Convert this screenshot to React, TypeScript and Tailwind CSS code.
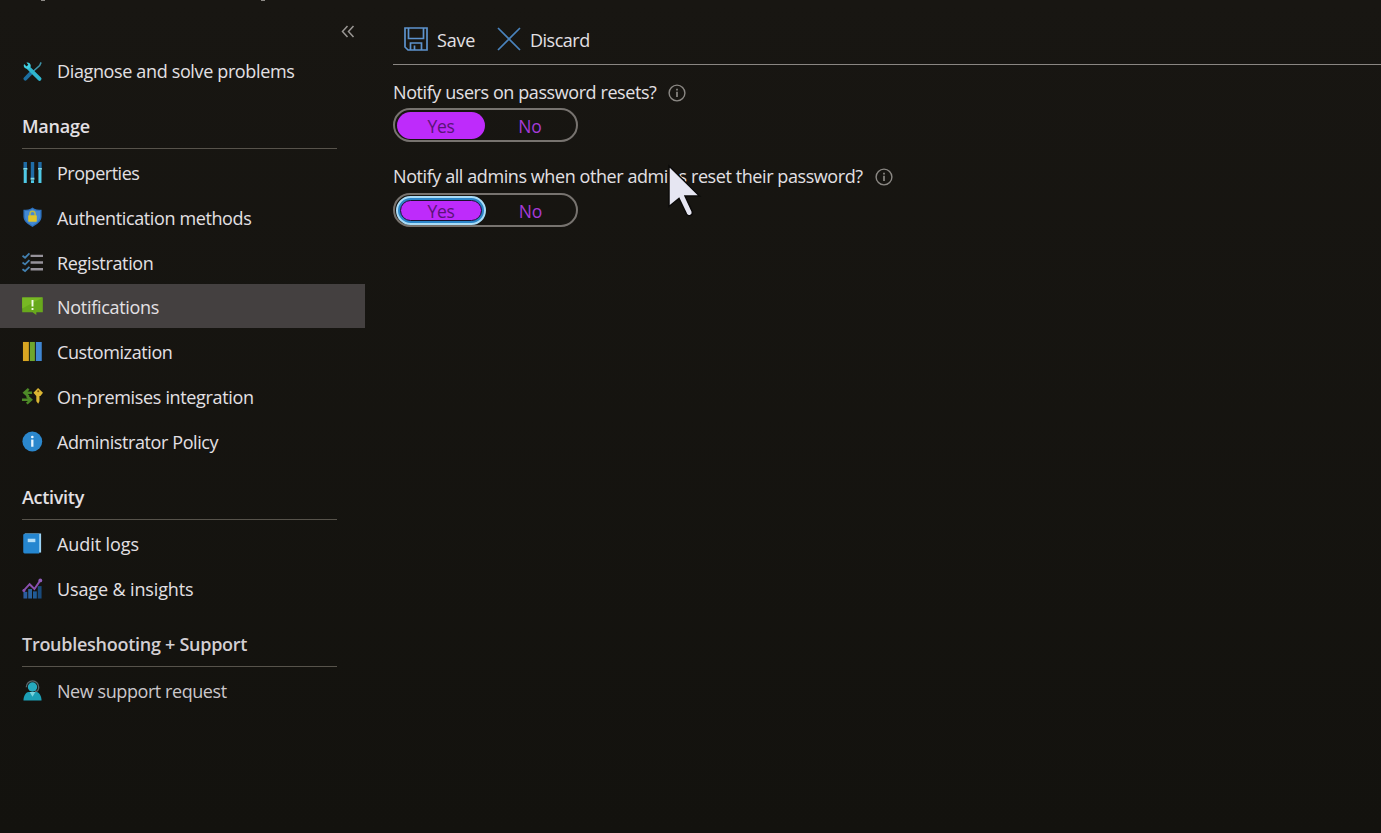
import React from "react";

type IconProps = { children: React.ReactNode };

function Icon({ children }: IconProps) {
  return (
    <svg viewBox="0 0 22 22" className="mt-[2px] h-[21px] w-[21px] shrink-0" fill="none">
      {children}
    </svg>
  );
}

const ToolsIcon = () => (
  <Icon>
    <path d="M20 1.500 18.500 4.800 11.500 11" stroke="#3f93a8" strokeWidth="1.600" />
    <path d="M9.500 12.500 3.500 18.600" stroke="#1c6ea0" strokeWidth="4" strokeLinecap="round" />
    <path d="M6.500 7 18.400 18.800" stroke="#2fb6cf" strokeWidth="4" strokeLinecap="round" />
    <path d="M2.200 3.200 4.800 5.700 6.600 3.900 4.600 1.600C7 1 9.400 2.600 9.200 5.600 8.400 8.400 5 9 3 7.400 1.700 6.200 1.600 4.500 2.200 3.200Z" fill="#3fd0e2" />
  </Icon>
);

const SlidersIcon = () => (
  <Icon>
    <path d="M3.400 0v6.500M11 0v17M18.800 0v6.500" stroke="#1f6ca6" strokeWidth="3.600" />
    <path d="M3.400 8v14M18.800 8v14M11 19v3" stroke="#4fc9e6" strokeWidth="3.200" />
    <path d="M1.400 7.200h4.200M16.800 7.200h4M9 17.500h4" stroke="#7cdcf0" strokeWidth="2" />
  </Icon>
);

const ShieldIcon = () => (
  <Icon>
    <path d="M11 .5C8.500 2.600 5 3 1.500 3v7c0 5.200 5.300 8.600 9.500 11 4.200-2.400 9.500-5.800 9.500-11V3c-3.500 0-7-.4-9.500-2.500Z" fill="#2d72c0" />
    <path d="M11 2C8.500 3.900 5.800 4.200 3 4.300V10c0 4.300 4.300 7.100 8 9.300 3.700-2.200 8-5 8-9.300V4.300C16.200 4.200 13.500 3.900 11 2Z" fill="#4389d3" />
    <path d="M8.300 9V7.200a2.700 2.700 0 0 1 5.400 0V9" stroke="#b9b84a" strokeWidth="1.600" />
    <rect x="6.500" y="8.600" width="9" height="6.800" rx=".7" fill="#dfc62c" />
  </Icon>
);

const ChecklistIcon = () => (
  <Icon>
    <path d="m.5 4 2.700 2L7.800 1.500M.5 11l2.700 2 4.600-4.500M.5 18l2.700 2 4.600-4.500" stroke="#4380b0" strokeWidth="1.900" />
    <path d="M9 4h13M9 11h13M9 18h13" stroke="#96929a" strokeWidth="2.500" />
  </Icon>
);

const AlertIcon = () => (
  <Icon>
    <path d="M.2 1.500h21.600V17H15v3L11 17H.2Z" fill="#68a91c" />
    <path d="M.2 1.500h21.600L.2 13Z" fill="#77b824" />
    <path d="M11 4.200v6.800M11 12.500v2.200" stroke="#f4fbe9" strokeWidth="2" />
  </Icon>
);

const ColumnsIcon = () => (
  <Icon>
    <path d="M1 1h6.200v20H1z" fill="#d9a622" />
    <path d="M8.200 1h5.300v20H8.200z" fill="#6fa62c" />
    <path d="M14.500 1h6.200v20h-6.200z" fill="#3f86d2" />
  </Icon>
);

const SyncKeyIcon = () => (
  <Icon>
    <path d="M10.500 7H3M7 3 2.500 7 7 11M0 14.500h8M5 10.500l4.500 4-4.500 4" stroke="#4e8a28" strokeWidth="2.600" />
    <path d="M16.800 2 22 7l-2.700 3.500h-1V16l-1.300 2.500-2-2.500v-5.500L12 7Z" fill="#dcb633" />
    <circle cx="17" cy="5.500" r="1.100" fill="#77510a" />
  </Icon>
);

const InfoBlueIcon = () => (
  <Icon>
    <circle cx="10.800" cy="11" r="10.400" fill="#2b87cd" />
    <circle cx="10.800" cy="6.300" r="1.400" fill="#e8f5ff" />
    <path d="M10.800 9v7.500" stroke="#e8f5ff" strokeWidth="2.400" />
  </Icon>
);

const BookIcon = () => (
  <Icon>
    <path d="M3 .5h17V20.500H3z" fill="#9cd3f5" />
    <path d="M1.300 2A1.500 1.500 0 0 1 2.800.8H18V21.500H2.800a1.500 1.500 0 0 1-1.500-1.500Z" fill="#2586d0" />
    <path d="M6 6h8v3.600H6z" fill="#b5dff8" />
  </Icon>
);

const ChartIcon = () => (
  <Icon>
    <path d="M1.500 14.500h4v7h-4z" fill="#2b5d9e" />
    <path d="M6.500 11.500h4v10h-4z" fill="#2a619c" />
    <path d="M11.500 14h4v7.500h-4z" fill="#205b96" />
    <path d="M16.500 8.500h4v13h-4z" fill="#194a7b" />
    <path d="m1.500 13.500 6.500-7 5 5L19.200 2.500" stroke="#8a50b0" strokeWidth="2" />
    <circle cx="19.200" cy="2.500" r="2" fill="#8f5cb8" />
    <circle cx="2" cy="13" r="1.600" fill="#8a50b0" />
  </Icon>
);

const SupportIcon = () => (
  <Icon>
    <path d="M4.500 7.500a6.300 6.300 0 0 1 13 0c0 3-1.500 4.500-4 4.800" stroke="#59666c" strokeWidth="1.400" />
    <path d="M1.500 21.500c.3-5 2-8.500 5.500-9h8c3.500.5 5.200 4 5.500 9Z" fill="#1c9fb5" />
    <circle cx="11" cy="7.300" r="4.900" fill="#26a9bf" />
    <path d="m8 12.500 3 5 3-5Z" fill="#79d3de" />
  </Icon>
);

type Item = { label: string; icon: () => React.ReactElement; spacing: string; active?: boolean };

const manage: Item[] = [
  { label: "Properties", icon: SlidersIcon, spacing: "tracking-[-0.47px]" },
  { label: "Authentication methods", icon: ShieldIcon, spacing: "tracking-[-0.38px]" },
  { label: "Registration", icon: ChecklistIcon, spacing: "tracking-[-0.35px]" },
  { label: "Notifications", icon: AlertIcon, spacing: "tracking-[-0.3px]", active: true },
  { label: "Customization", icon: ColumnsIcon, spacing: "tracking-[-0.4px]" },
  { label: "On-premises integration", icon: SyncKeyIcon, spacing: "tracking-[-0.34px]" },
  { label: "Administrator Policy", icon: InfoBlueIcon, spacing: "tracking-[-0.4px]" },
];

const activity: Item[] = [
  { label: "Audit logs", icon: BookIcon, spacing: "tracking-[-0.08px]" },
  { label: "Usage & insights", icon: ChartIcon, spacing: "tracking-[-0.13px]" },
];

const support: Item[] = [{ label: "New support request", icon: SupportIcon, spacing: "tracking-[-0.43px] text-[#cbc7cb]" }];

function NavRow({ item, raised }: { item: Item; raised?: boolean }) {
  const Glyph = item.icon;
  return (
    <a className={`flex h-[44.85px] items-center pl-[22px] ${item.active ? "bg-[#444040]" : ""}`}>
      <Glyph />
      <span className={`ml-[14px] leading-6 whitespace-nowrap ${raised ? "pt-[1px]" : "pt-[3px]"} ${item.spacing}`}>{item.label}</span>
    </a>
  );
}

function Section({ title, items, heading }: { title: string; items: Item[]; heading: string }) {
  return (
    <section>
      <h2 className={`mr-[28px] ml-[22px] flex items-end border-b border-[#57534b] pb-[10px] leading-6 font-semibold ${heading}`}>
        {title}
      </h2>
      {items.map((item) => (
        <NavRow key={item.label} item={item} />
      ))}
    </section>
  );
}

function Info() {
  return (
    <svg viewBox="0 0 18 18" className="mt-[2px] h-[18px] w-[18px]" fill="none">
      <circle cx="9" cy="9" r="7.900" stroke="#8b8884" strokeWidth="1.400" />
      <path d="M9 7.700v5.300M9 4.800v1.600" stroke="#8b8884" strokeWidth="1.700" />
    </svg>
  );
}

function Toggle({ focused }: { focused?: boolean }) {
  return (
    <div className="flex h-[34px] w-[185px] items-center rounded-full border-2 border-[#77736f] p-[1px] text-[17.500px]">
      {focused ? (
        <div className="h-[29px] w-[90px] shrink-0 rounded-full border-2 border-[#a9dcf8] bg-[#2b86c9] p-[2px]">
          <button className="flex h-full w-full items-center justify-center rounded-full border border-[#1c1030] bg-[#be2bfb] pt-[2px] tracking-[-0.3px] text-[#5a1478]">Yes</button>
        </div>
      ) : (
        <button className="ml-[1px] flex h-[27px] w-[88px] shrink-0 items-center justify-center rounded-full bg-[#be2bfb] pt-[2px] tracking-[-0.3px] text-[#5a1478]">Yes</button>
      )}
      <button className="flex-1 pt-[2px] text-center text-[#a63bd8]">No</button>
    </div>
  );
}

export default function App() {
  return (
    <div className="relative flex h-[833px] w-[1381px] overflow-hidden bg-linear-to-b from-[#181612] to-[#13120e] font-['Open_Sans','Noto_Sans',sans-serif] text-[18px] text-[#e3e0e4]">
      <aside className="w-[365px] shrink-0">
        <div className="flex h-[48px] justify-end pt-[25px] pr-[10px]">
          <svg viewBox="0 0 14 14" className="h-[14px] w-[14px]" fill="none" stroke="#9a9794" strokeWidth="1.500">
            <path d="M6.500 1 1.500 6.500l5 5.500M12.500 1l-5 5.500 5 5.500" />
          </svg>
        </div>
        <NavRow raised item={{ label: "Diagnose and solve problems", icon: ToolsIcon, spacing: "tracking-[-0.36px]" }} />
        <Section title="Manage" items={manage} heading="h-[56.15px] tracking-[-0.25px]" />
        <Section title="Activity" items={activity} heading="h-[57px] tracking-[-0.3px]" />
        <Section title="Troubleshooting + Support" items={support} heading="h-[57.200px] tracking-[-0.27px] text-[#d3cfd3]" />
      </aside>
      <main className="ml-[28px] flex-1">
        <div className="flex h-[65px] items-center border-b border-[#8a8682] pt-[13px] pl-[11px]">
          <svg viewBox="0 0 24 24" className="h-[24px] w-[24px]" fill="none" stroke="#5d93cd" strokeWidth="1.700">
            <path d="M1 1h22v22H4l-3-3ZM4.500 1v10.500h15V1M6.500 23v-7h11v7M10.500 18.500V23" />
          </svg>
          <span className="ml-[9px] w-[38px] pt-[3px] tracking-[-0.2px]">Save</span>
          <svg viewBox="0 0 24 24" className="ml-[22px] h-[24px] w-[24px]" fill="none" stroke="#4a83bd" strokeWidth="1.700">
            <path d="m1 1 22 22M23 1 1 23" />
          </svg>
          <span className="ml-[9px] pt-[3px] tracking-[-0.5px]">Discard</span>
        </div>
        <div className="mt-[15px] flex h-6 items-center">
          <span className="w-[275px] tracking-[-0.42px] whitespace-nowrap">Notify users on password resets?</span>
          <Info />
        </div>
        <div className="mt-[4px]"><Toggle /></div>
        <div className="mt-[22px] flex h-6 items-center">
          <span className="w-[482px] tracking-[-0.42px] whitespace-nowrap">Notify all admins when other admins reset their password?</span>
          <Info />
        </div>
        <div className="mt-[5px]"><Toggle focused /></div>
      </main>
      <svg viewBox="0 0 230 2" className="absolute top-0 left-[40px] h-[2px] w-[230px]">
        <path d="M1 0h4v1H1zM221 0h4v1h-4z" fill="#8d8a86" />
      </svg>
      <svg viewBox="0 0 40 60" className="absolute top-[162px] left-[664px] h-[60px] w-[40px]" fill="none">
        <path d="M5 4v40.500l10-8 7.500 15.500q1.300 2.500 4 1.400 2.700-1.300 1.700-4L21 34h14.500Z" fill="#e6e6f2" stroke="#0c0b0a" strokeWidth="1.500" />
      </svg>
    </div>
  );
}
